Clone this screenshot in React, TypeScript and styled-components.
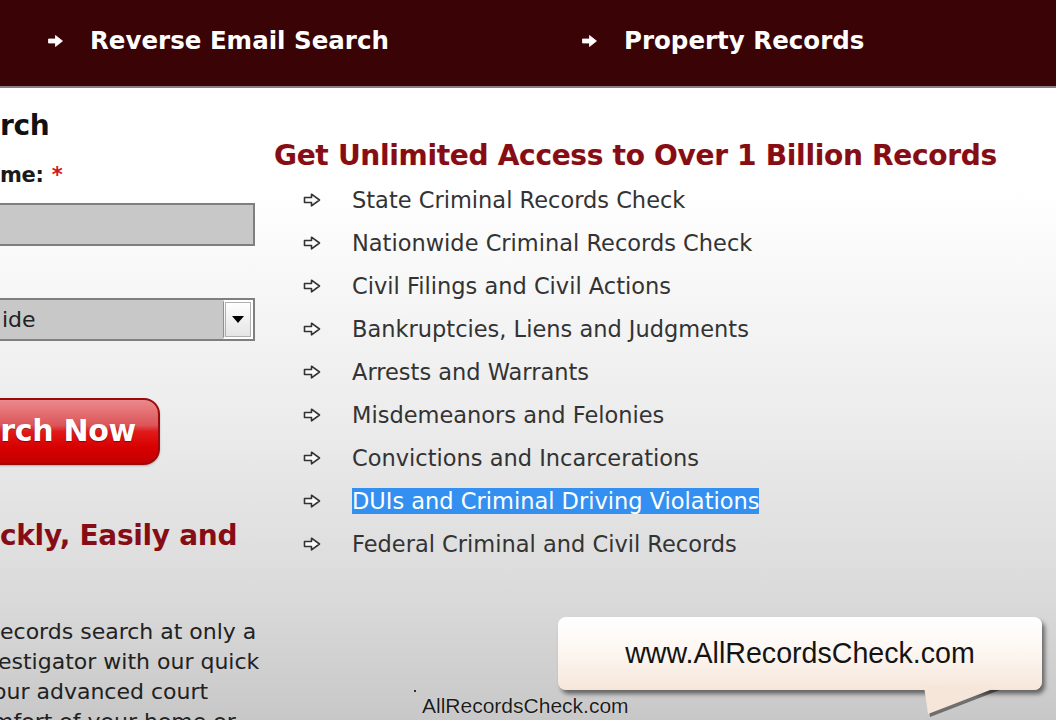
import styled, { createGlobalStyle } from "styled-components"

const GlobalStyle = createGlobalStyle`
  html, body {
    margin: 0;
    padding: 0;
  }
  body {
    width: 1056px;
    height: 720px;
    overflow: hidden;
    font-family: "DejaVu Sans", Verdana, sans-serif;
    color: #222;
  }
`

const Page = styled.div`
  position: relative;
  width: 1056px;
  height: 720px;
  overflow: hidden;
  display: flex;
  flex-direction: column;
`

// top menu bar
const Nav = styled.nav`
  height: 88px;
  flex-shrink: 0;
  box-sizing: border-box;
  padding: 0 0 5px 48px;
  display: flex;
  align-items: center;
  background: #3a0306;
  border-bottom: 2px solid #8d7f7f;
`

const NavItem = styled.a`
  flex-shrink: 0;
  display: inline-flex;
  align-items: center;
  gap: 27px;
  width: 534px;
  color: #fff;
  font-weight: 700;
  font-size: 24.5px;
  line-height: 30px;
  text-decoration: none;
  white-space: nowrap;
`

const Content = styled.main`
  flex: 1;
  display: flex;
  gap: 14px;
  background: linear-gradient(
    to bottom,
    #ffffff 0px,
    #ffffff 100px,
    #ececec 330px,
    #dadada 510px,
    #c8c8c8 630px
  );
`

const LeftCol = styled.section`
  width: 260px;
  flex-shrink: 0;
  display: flex;
  flex-direction: column;
  padding-top: 21px;
`

const FormTitle = styled.h2`
  margin: 0;
  font-size: 28px;
  line-height: 34px;
  font-weight: 700;
  color: #111;
  letter-spacing: -0.3px;
`

const Label = styled.label`
  margin-top: 19px;
  font-size: 21px;
  line-height: 26px;
  font-weight: 700;
  color: #1a1a1a;
  letter-spacing: -0.3px;
`

const Required = styled.span`
  color: #d4141c;
  margin-left: 8px;
`

const TextInput = styled.div`
  margin: 15px 0 0 -20px;
  width: 275px;
  height: 43px;
  box-sizing: border-box;
  background: #c8c8c8;
  border: 2px solid #7f7f7f;
`

const Select = styled.div`
  margin: 52px 0 0 -20px;
  width: 275px;
  height: 43px;
  box-sizing: border-box;
  display: flex;
  align-items: center;
  background: #c8c8c8;
  border: 2px solid #7f7f7f;
  font-size: 22px;
  color: #222;
`

const SelectValue = styled.span`
  flex: 1;
  padding-left: 20px;
`

const SelectButton = styled.span`
  width: 30px;
  height: 100%;
  box-sizing: border-box;
  display: flex;
  align-items: center;
  justify-content: center;
  background: linear-gradient(#ffffff, #e4e4e4);
  border: 2px solid #fff;
  border-left: 1px solid #8f8f8f;
  outline: 1px solid #b0b0b0;
  outline-offset: -3px;

  &:after {
    content: "";
    border-left: 6px solid transparent;
    border-right: 6px solid transparent;
    border-top: 7px solid #000;
  }
`

const SearchButton = styled.button`
  display: block;
  margin: 57px 0 0 -30px;
  width: 190px;
  height: 67px;
  box-sizing: border-box;
  padding: 0 22px 2px 0;
  text-align: right;
  border: 2px solid #9a0a0a;
  border-radius: 16px;
  background: linear-gradient(
    to bottom,
    #ea8a8c 0%,
    #dc5559 40%,
    #e11a1a 50%,
    #d80000 75%,
    #c40000 100%
  );
  box-shadow: 0 1px 2px rgba(0, 0, 0, 0.25);
  color: #fff;
  font-family: "DejaVu Sans", Verdana, sans-serif;
  font-size: 30px;
  font-weight: 700;
  letter-spacing: -0.3px;
  text-shadow: 0 1px 1px rgba(90, 0, 0, 0.6);
  white-space: nowrap;
`

const Tagline = styled.h3`
  margin: 54px 0 0;
  font-size: 28px;
  line-height: 34px;
  font-weight: 700;
  color: #860d16;
  letter-spacing: -0.3px;
  white-space: nowrap;
`

const Blurb = styled.p`
  margin: 64px 0 0;
  font-size: 22px;
  line-height: 30px;
  color: #222;
`

const BlurbLine = styled.span<{ $shift: number }>`
  display: block;
  white-space: nowrap;
  margin-left: ${p => p.$shift}px;
`

const RightCol = styled.section`
  flex: 1;
  padding-top: 51px;
`

const Heading = styled.h1`
  margin: 0;
  font-size: 28px;
  line-height: 34px;
  font-weight: 700;
  color: #860d16;
  letter-spacing: -0.3px;
  white-space: nowrap;
  text-shadow: 0 0 1px rgba(220, 120, 60, 0.35);
`

const List = styled.ul`
  list-style: none;
  margin: 5px 0 0;
  padding: 0 0 0 29px;
`

const Item = styled.li`
  display: flex;
  align-items: center;
  gap: 31px;
  height: 43px;
  font-size: 22.5px;
  line-height: 43px;
  color: #333;
  white-space: nowrap;
`

const ItemText = styled.span<{ $selected?: boolean }>`
  line-height: normal;
  color: ${p => (p.$selected ? "#fff" : "#333")};
  background: ${p => (p.$selected ? "#3390f0" : "transparent")};
`

// speech bubble overlay
const Bubble = styled.div`
  position: absolute;
  left: 558px;
  top: 617px;
  width: 484px;
  height: 73px;
  display: flex;
  align-items: center;
  justify-content: center;
  border-radius: 8px;
  background: linear-gradient(to bottom, #ffffff 0%, #fdf7f2 45%, #f6e6da 100%);
  box-shadow: 3px 4px 4px rgba(0, 0, 0, 0.5);
  font-family: "Liberation Sans", Arial, sans-serif;
  font-size: 28.6px;
  color: #141414;
`

const Tail = styled.svg`
  position: absolute;
  left: 920px;
  top: 686px;
`

const Watermark = styled.div`
  position: absolute;
  left: 422px;
  top: 694px;
  font-family: "Liberation Sans", Arial, sans-serif;
  font-size: 21px;
  line-height: 24px;
  color: #1c1c1c;
  text-shadow: 0 0 1px #fff;

  &:before {
    content: "";
    position: absolute;
    left: -8px;
    top: -4px;
    width: 2px;
    height: 2px;
    background: #333;
  }
`

const NavArrow = () => (
  <svg width="15" height="12" viewBox="0 0 15 12">
    <path d="M0.5 4 H7.5 V0.5 L14.5 6 L7.5 11.5 V8 H0.5 Z" fill="#fff" strokeLinejoin="round" stroke="#fff" strokeWidth="0.8" />
  </svg>
)

const ListArrow = () => (
  <svg width="18" height="14" viewBox="0 0 18 14">
    <path
      d="M1.5 4.5 H8.5 V1.2 L16.5 7 L8.5 12.8 V9.5 H1.5 Z"
      fill="#fafafa"
      stroke="#333"
      strokeWidth="1.6"
      strokeLinejoin="round"
    />
  </svg>
)

const records = [
  "State Criminal Records Check",
  "Nationwide Criminal Records Check",
  "Civil Filings and Civil Actions",
  "Bankruptcies, Liens and Judgments",
  "Arrests and Warrants",
  "Misdemeanors and Felonies",
  "Convictions and Incarcerations",
  "DUIs and Criminal Driving Violations",
  "Federal Criminal and Civil Records",
]

const blurb = [
  { text: "ecords search at only a", shift: 0 },
  { text: "estigator with our quick", shift: -2 },
  { text: "our advanced court", shift: -7 },
  { text: "mfort of your home or", shift: -8 },
]

export default function App() {
  return (
    <>
      <GlobalStyle />
      <Page>
        <Nav>
          <NavItem>
            <NavArrow />
            Reverse Email Search
          </NavItem>
          <NavItem>
            <NavArrow />
            Property Records
          </NavItem>
        </Nav>
        <Content>
          <LeftCol>
            <FormTitle>rch</FormTitle>
            <Label>
              me:<Required>*</Required>
            </Label>
            <TextInput />
            <Select>
              <SelectValue>ide</SelectValue>
              <SelectButton />
            </Select>
            <SearchButton>rch Now</SearchButton>
            <Tagline>ckly, Easily and</Tagline>
            <Blurb>
              {blurb.map(line => (
                <BlurbLine key={line.text} $shift={line.shift}>
                  {line.text}
                </BlurbLine>
              ))}
            </Blurb>
          </LeftCol>
          <RightCol>
            <Heading>Get Unlimited Access to Over 1 Billion Records</Heading>
            <List>
              {records.map((r, i) => (
                <Item key={r}>
                  <ListArrow />
                  <ItemText $selected={i === 7}>{r}</ItemText>
                </Item>
              ))}
            </List>
          </RightCol>
        </Content>
        <Bubble>www.AllRecordsCheck.com</Bubble>
        <Tail width="84" height="34" viewBox="0 0 84 34">
          <polygon points="6,3 80,4 10,31" fill="rgba(0,0,0,0.45)" />
          <polygon points="4,0 78,1 8,28" fill="#f6e6da" />
        </Tail>
        <Watermark>AllRecordsCheck.com</Watermark>
      </Page>
    </>
  )
}
